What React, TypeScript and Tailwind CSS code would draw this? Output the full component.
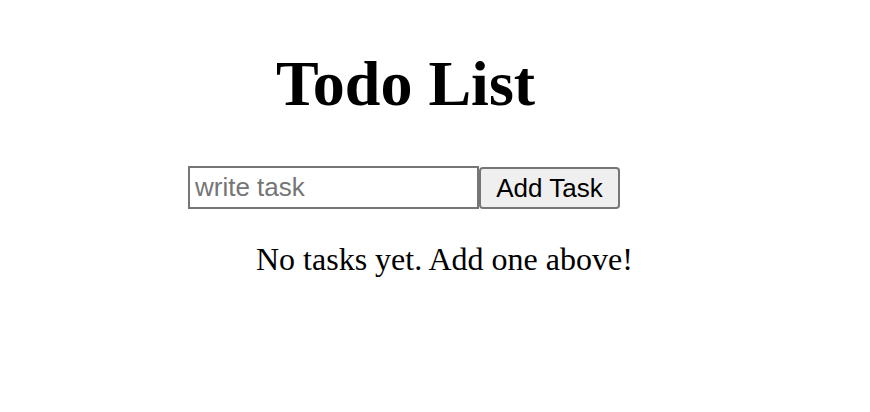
import { useState } from "react";

const App = () => {
  const [tasks, setTasks] = useState<string[]>([]);
  const [text, setText] = useState("");

  const addTask = () => {
    if (!text.trim()) return;
    setTasks([...tasks, text.trim()]);
    setText("");
  };

  return (
    <div className="w-[870px] h-[412px] bg-white text-black flex flex-col items-start" style={{ fontFamily: '"Liberation Serif", serif' }}>
      <h1 className="mt-[52px] ml-[276px] text-[64px] leading-none font-bold">Todo List</h1>

      <div className="mt-[50px] ml-[188px] flex items-center">
        <input
          value={text}
          onChange={e => setText(e.target.value)}
          placeholder="write task"
          className="w-[291px] h-[43px] border-2 border-[#767676] bg-white px-[5px] text-[26px] text-black placeholder:text-[#757575] outline-none"
          style={{ fontFamily: '"Liberation Sans", Arial, sans-serif' }}
        />
        <button
          onClick={addTask}
          className="h-[42px] w-[141px] border-2 border-[#767676] rounded-[4px] bg-[#efefef] text-[26px] leading-none text-black"
          style={{ fontFamily: '"Liberation Sans", Arial, sans-serif' }}
        >
          Add Task
        </button>
      </div>

      {tasks.length === 0 ? (
        <p className="mt-[34px] ml-[256px] text-[32px] leading-none">No tasks yet. Add one above!</p>
      ) : (
        <ul className="mt-[34px] ml-[256px] text-[32px] leading-none">
          {tasks.map((t, i) => <li key={i}>{t}</li>)}
        </ul>
      )}
    </div>
  );
};

export default App;
